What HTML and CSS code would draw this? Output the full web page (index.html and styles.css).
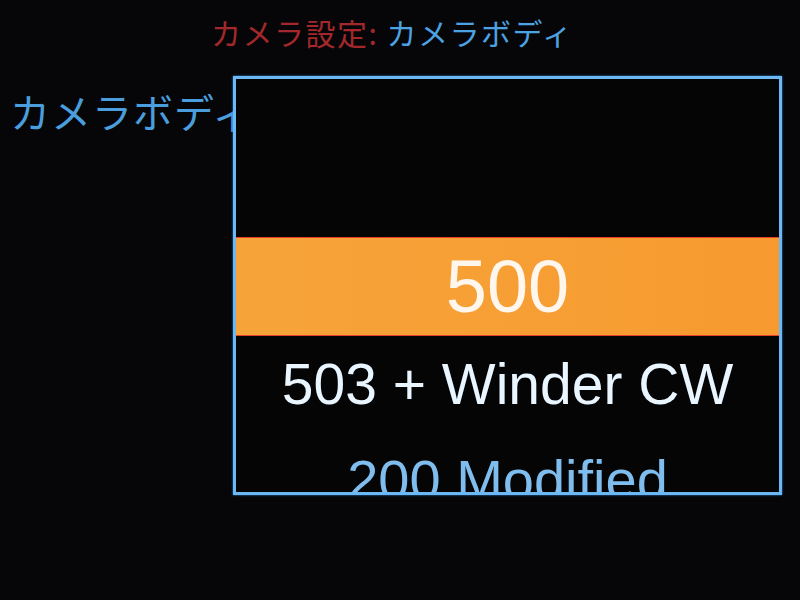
FILE: index.html
```html
<!DOCTYPE html>
<html lang="ja">
<head>
  <meta charset="UTF-8">
  <title>カメラ設定</title>
  <link rel="stylesheet" href="styles.css">
</head>
<body>
  <header class="title">
    <span class="section">カメラ設定:</span> <span class="current">カメラボディ</span>
  </header>

  <div class="setting">カメラボディ</div>

  <!-- picker popup for the body setting -->
  <div class="picker">
    <ul class="options">
      <li class="option selected">500</li>
      <li class="option">503 + Winder CW</li>
      <li class="option dim">200 Modified</li>
    </ul>
  </div>
</body>
</html>
```

FILE: styles.css
```css
html, body { margin: 0; padding: 0; }
body {
  width: 800px; height: 600px; overflow: hidden; position: relative;
  background: #060608;
  font-family: "Noto Sans CJK JP", "Noto Sans", sans-serif;
}

.title { padding: 13px 0 0 211px; font-size: 30px; line-height: 38px; letter-spacing: 1.5px; }
.section { color: #a3282b; }
.current { color: #4da2e2; }

.setting { margin-top: 36px; padding-left: 10px; font-size: 40px; line-height: 48px; color: #4a9ede; letter-spacing: 1px; }

.picker {
  position: absolute; left: 233px; top: 76px;
  width: 543px; height: 413px;
  border: 3px solid #6cb8f4;
  box-shadow: 0 0 2px #2f86dc;
  background: #050506;
  overflow: hidden;
}
.options { list-style: none; margin: 0; padding: 158px 0 0; font-family: "Liberation Sans", Arial, sans-serif; }
.option { height: 96px; line-height: 96px; text-align: center; font-size: 57px; color: #e9f5ff; }
.option.selected {
  height: 97px; line-height: 97px; font-size: 74px; color: #fff6ee;
  background: linear-gradient(90deg, #f6a43a, #f79a2f);
  border-top: 1px solid #e8402a; border-bottom: 1px solid #e8402a;
}
.option.dim { color: #7fbdee; font-size: 56px; }
```
